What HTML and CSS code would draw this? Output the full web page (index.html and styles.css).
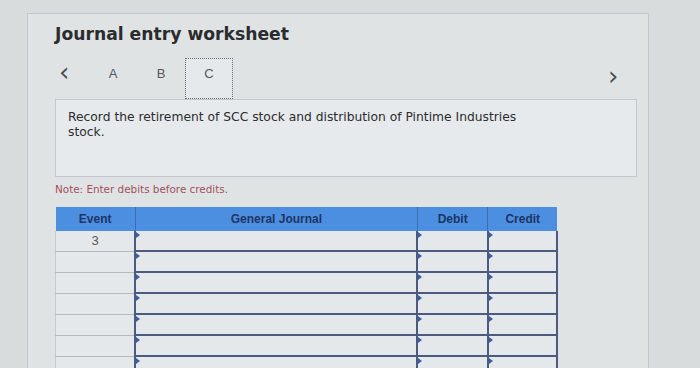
FILE: index.html
```html
<!DOCTYPE html>
<html lang="en">
<head>
    <meta charset="UTF-8">
    <title>Journal entry worksheet</title>
    <link rel="stylesheet" href="styles.css">
</head>
<body>
    <div class="panel">
        <h1>Journal entry worksheet</h1>

        <div class="tabs">
            <span class="arrow">&lsaquo;</span>
            <span class="tab">A</span>
            <span class="tab">B</span>
            <span class="tab active">C</span>
            <span class="arrow next">&rsaquo;</span>
        </div>

        <div class="prompt">
            <p>Record the retirement of SCC stock and distribution of Pintime Industries stock.</p>
        </div>

        <p class="note">Note: Enter debits before credits.</p>

        <table class="journal">
            <thead>
                <tr>
                    <th class="col-event">Event</th>
                    <th class="col-journal">General Journal</th>
                    <th class="col-debit">Debit</th>
                    <th class="col-credit">Credit</th>
                </tr>
            </thead>
            <tbody>
                <tr><td class="event">3</td><td class="field"></td><td class="field"></td><td class="field"></td></tr>
                <tr><td class="event"></td><td class="field"></td><td class="field"></td><td class="field"></td></tr>
                <tr><td class="event"></td><td class="field"></td><td class="field"></td><td class="field"></td></tr>
                <tr><td class="event"></td><td class="field"></td><td class="field"></td><td class="field"></td></tr>
                <tr><td class="event"></td><td class="field"></td><td class="field"></td><td class="field"></td></tr>
                <tr><td class="event"></td><td class="field"></td><td class="field"></td><td class="field"></td></tr>
                <tr><td class="event"></td><td class="field"></td><td class="field"></td><td class="field"></td></tr>
            </tbody>
        </table>
    </div>
</body>
</html>
```

FILE: styles.css
```css
/* worksheet styles */
body {
    margin: 0;
    background-color: #d9dcdd;
    font-family: "DejaVu Sans", Verdana, sans-serif;
    overflow: hidden;
}

.panel {
    margin: 13px 0 0 27px;
    width: 593px;
    height: 400px;
    padding: 0 0 0 27px;
    background-color: #e0e3e4;
    border: 1px solid #c4c8ca;
    border-bottom: none;
}

h1 {
    margin: 0;
    padding-top: 8px;
    font-size: 17.2px;
    font-weight: bold;
    color: #2a2c2e;
    height: 36px;
    line-height: 24px;
}

.tabs {
    display: flex;
    align-items: center;
    height: 41px;
    font-family: "Liberation Sans", Arial, sans-serif;
    font-size: 13px;
    color: #55595c;
}

.arrow {
    font-family: "DejaVu Sans", sans-serif;
    font-size: 26px;
    color: #4a4e52;
    width: 30px;
    padding-left: 4px;
    line-height: 20px;
    margin-top: -14px;
}

.arrow.next {
    margin-left: auto;
    width: 20px;
    padding-left: 0;
    margin-right: 20px;
    margin-top: -6px;
}

.tab {
    width: 46px;
    height: 30px;
    padding-bottom: 9px;
    line-height: 30px;
    text-align: center;
    border: 1px solid transparent;
}

.tab.active {
    border: 1px dotted #666a70;
    background-color: #e6e9ec;
}

.prompt {
    width: 568px;
    height: 66px;
    padding: 10px 0 0 12px;
    background-color: #e7eaec;
    border: 1px solid #c5c8cb;
}

.prompt p {
    margin: 0;
    width: 460px;
    font-size: 12.3px;
    line-height: 15px;
    color: #2b2d30;
}

.note {
    margin: 5px 0 0;
    height: 25px;
    font-size: 10.4px;
    line-height: 14px;
    color: #a0525c;
}

.journal {
    border-collapse: collapse;
    width: 503px;
    font-family: "Liberation Sans", Arial, sans-serif;
    font-size: 12px;
}

.journal th {
    height: 24px;
    padding: 0;
    background-color: #4c8fe0;
    color: #1d3565;
    font-weight: bold;
    border-left: 1px solid #3d6fb0;
}

.journal th:first-child {
    border-left: none;
}

.col-event { width: 80px; }
.col-journal { width: 284px; }
.col-debit { width: 70px; }
.col-credit { width: 69px; }

.journal td {
    height: 19px;
    padding: 0;
    background-color: #e5e8eb;
}

.journal td.event {
    text-align: center;
    color: #55595c;
    font-size: 13px;
    border-bottom: 1px solid #b5b9be;
    border-left: 1px solid #c8ccd0;
}

.journal td.field {
    position: relative;
    border-left: 2px solid #4c5a82;
    border-bottom: 2px solid #4c5a82;
}

.journal td.field:last-child {
    border-right: 2px solid #4c5a82;
}

/* small marker at the corner of each entry cell */
.journal td.field::before {
    content: "";
    position: absolute;
    top: 1px;
    left: 0;
    border-top: 3px solid transparent;
    border-bottom: 3px solid transparent;
    border-left: 4px solid #3a5fa0;
}
```
